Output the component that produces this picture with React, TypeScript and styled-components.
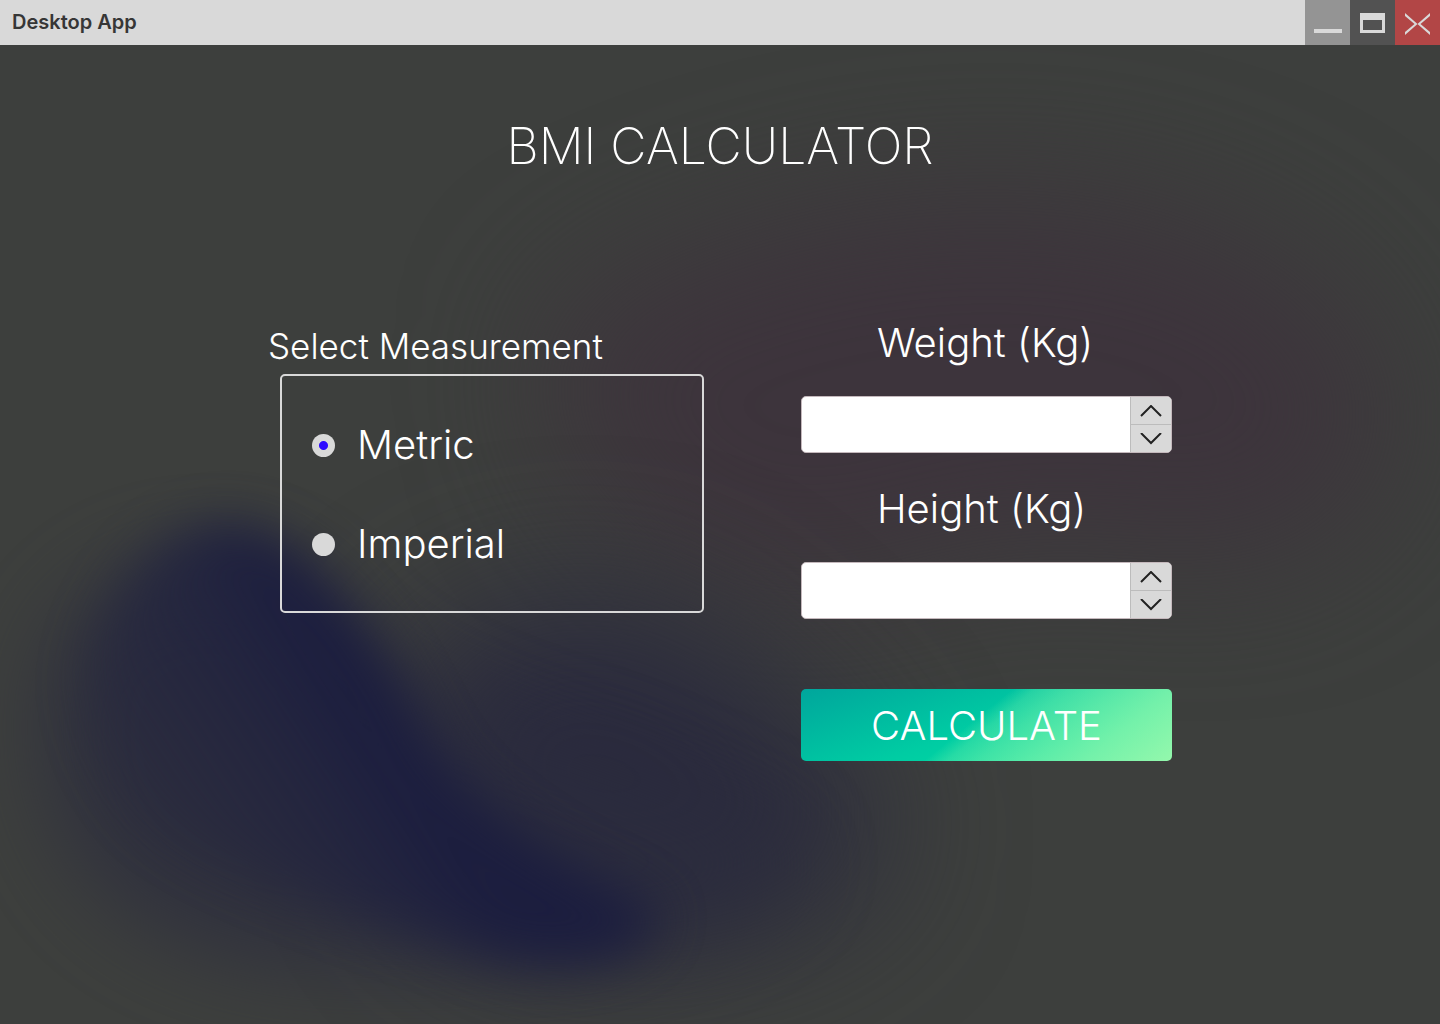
import React, { useState } from "react";
import styled, { createGlobalStyle } from "styled-components";

const GlobalStyle = createGlobalStyle`
  *, *::before, *::after { box-sizing: border-box; }
  body { margin: 0; background: #3d3f3d; }
  button, input { font: inherit; }
`;

const Window = styled.div`
  position: relative;
  isolation: isolate;
  display: flex;
  flex-direction: column;
  min-height: 100vh;
  background: #3d3f3d;
  color: #fff;
  font-family: Inter, "Liberation Sans", sans-serif;
  font-weight: 300;
`;

const Backdrop = styled.svg`
  position: absolute;
  inset: 0;
  z-index: -1;
  width: 100%;
  height: 100%;
`;

const TitleBar = styled.header`
  display: flex;
  justify-content: space-between;
  height: 45px;
  padding-left: 12px;
  background: #d9d9d9;
`;

const AppName = styled.span`
  color: #363636;
  font-size: 20px;
  font-weight: 600;
  line-height: 44px;
`;

const WindowControls = styled.div`
  display: flex;
`;

const WindowButton = styled.button<{ $color: string }>`
  display: block;
  width: 45px;
  height: 45px;
  padding: 0;
  border: 0;
  background: ${(p) => p.$color};
  color: #d9d9d9;

  svg { display: block; }
`;

const Main = styled.main`
  display: flex;
  flex-direction: column;
  padding: 71px 24px 64px;
`;

const Title = styled.h1`
  margin: 0 0 142px;
  font-size: 50px;
  font-weight: 200;
  line-height: 60px;
  text-align: center;
`;

const Form = styled.form`
  display: grid;
  grid-template-columns: minmax(0, 436px) minmax(0, 371px);
  justify-content: center;
  align-items: start;
  gap: 97px;
`;

const Measurement = styled.fieldset`
  min-width: 0;
  margin: 0;
  padding: 0;
  border: 0;
`;

const Legend = styled.legend`
  padding: 6px 0;
  font-size: 35px;
  line-height: 44px;
`;

const Options = styled.div`
  display: flex;
  flex-direction: column;
  gap: 49px;
  margin-left: 12px;
  padding: 44px 30px 42px;
  border: 2px solid #d9d9d9;
  border-radius: 5px;
`;

const Option = styled.label`
  display: flex;
  align-items: center;
  gap: 22px;
  font-size: 40px;
  line-height: 50px;
`;

const Radio = styled.input`
  appearance: none;
  width: 23px;
  height: 23px;
  margin: 0;
  border-radius: 50%;
  background: #d9d9d9;

  &:checked {
    background: radial-gradient(circle, #2e0aff 4px, #d9d9d9 5px);
  }
`;

const Fields = styled.div`
  display: flex;
  flex-direction: column;
  gap: 31px;
`;

const Field = styled.div`
  display: flex;
  flex-direction: column;
  gap: 28px;
`;

const FieldLabel = styled.label`
  padding-left: 76px;
  font-size: 40px;
  line-height: 50px;
`;

const Spinner = styled.div`
  display: flex;
  height: 57px;
  overflow: hidden;
  border: 1px solid #c4b8bc;
  border-radius: 5px;
  background: #fff;
`;

const NumberInput = styled.input`
  flex: 1;
  min-width: 0;
  padding: 0 16px;
  border: 0;
  outline: 0;
  background: transparent;
  color: #222;
  font-size: 35px;
  appearance: textfield;

  &::-webkit-inner-spin-button { appearance: none; }
`;

const Steps = styled.div`
  display: flex;
  flex-direction: column;
  width: 41px;
  border-left: 1px solid #bcbcbc;
`;

const StepButton = styled.button`
  display: flex;
  flex: 1;
  align-items: center;
  justify-content: center;
  padding: 0;
  border: 0;
  background: #d9d9d9;
  color: #222;

  & + & { border-top: 1px solid #bcbcbc; }
`;

const CalculateButton = styled.button`
  height: 72px;
  margin-top: 39px;
  padding: 2px 0 0;
  border: 0;
  border-radius: 5px;
  background:
    linear-gradient(
      141deg,
      rgba(148, 248, 172, 0) 46%,
      rgba(148, 248, 172, 0.26) 51%,
      rgba(148, 248, 172, 0.42) 58%,
      rgba(148, 248, 172, 0.6) 69%,
      rgba(148, 248, 172, 0.78) 81%,
      #94f8ac 100%
    ),
    linear-gradient(161deg, #00a69c 0%, #00cca3 50%, #00d9a3 75%);
  color: #fff;
  font-size: 40px;
  line-height: 50px;
`;

function WindowBackdrop() {
  return (
    <Backdrop viewBox="0 0 1440 1024" preserveAspectRatio="none" aria-hidden="true">
      <defs>
        <filter id="wide" x="-50%" y="-50%" width="200%" height="200%" colorInterpolationFilters="sRGB">
          <feGaussianBlur stdDeviation="70" />
        </filter>
        <filter id="medium" x="-50%" y="-50%" width="200%" height="200%" colorInterpolationFilters="sRGB">
          <feGaussianBlur stdDeviation="42" />
        </filter>
        <filter id="tight" x="-50%" y="-50%" width="200%" height="200%" colorInterpolationFilters="sRGB">
          <feGaussianBlur stdDeviation="25" />
        </filter>
        <linearGradient id="blue" gradientUnits="userSpaceOnUse" x1="400" y1="760" x2="140" y2="930">
          <stop offset="0" stopColor="#1b1d3f" />
          <stop offset="0.25" stopColor="#1e2040" stopOpacity="0.75" />
          <stop offset="1" stopColor="#24253f" stopOpacity="0.1" />
        </linearGradient>
      </defs>
      <path d="M560 320C760 190 1100 140 1300 280C1440 390 1400 540 1220 560C1080 540 980 530 880 580C740 640 500 480 560 320Z" fill="#3d343c" filter="url(#wide)" />
      <path d="M440 640C540 580 660 580 740 660C840 740 900 800 870 870C780 950 600 960 480 920C380 840 380 700 440 640Z" fill="#2a2a3d" filter="url(#wide)" />
      <path d="M50 660C90 560 260 520 330 620C430 740 640 740 800 850C780 960 480 980 320 970C160 960 10 880 50 660Z" fill="#2b2c3e" opacity="0.75" filter="url(#medium)" />
      <path d="M90 640C130 540 200 515 250 525C320 550 380 640 425 730C460 800 540 850 660 910C650 965 580 970 500 960C410 940 200 870 140 820C90 770 70 700 90 640Z" fill="url(#blue)" opacity="0.95" filter="url(#tight)" />
    </Backdrop>
  );
}

type NumberFieldProps = { id: string; label: string };

function NumberField({ id, label }: NumberFieldProps) {
  const [value, setValue] = useState("");
  const step = (amount: number) => setValue(String(Math.max(0, Number(value) + amount)));

  return (
    <Field>
      <FieldLabel htmlFor={id}>{label}</FieldLabel>
      <Spinner>
        <NumberInput id={id} type="number" min="0" value={value} onChange={(e) => setValue(e.target.value)} />
        <Steps>
          <StepButton type="button" aria-label={`Increase ${label}`} onClick={() => step(1)}>
            <svg width="22" height="12" viewBox="0 0 22 12" fill="none" stroke="currentColor" strokeWidth="2">
              <path d="M1 11L11 1L21 11" />
            </svg>
          </StepButton>
          <StepButton type="button" aria-label={`Decrease ${label}`} onClick={() => step(-1)}>
            <svg width="22" height="12" viewBox="0 0 22 12" fill="none" stroke="currentColor" strokeWidth="2">
              <path d="M1 0L11 10L21 0" />
            </svg>
          </StepButton>
        </Steps>
      </Spinner>
    </Field>
  );
}

export default function App() {
  const [unit, setUnit] = useState("Metric");

  return (
    <>
      <GlobalStyle />
      <Window>
        <WindowBackdrop />
        <TitleBar>
          <AppName>Desktop App</AppName>
          <WindowControls>
            <WindowButton type="button" aria-label="Minimize" $color="#949494">
              <svg width="45" height="45" viewBox="0 0 45 45" fill="currentColor">
                <path d="M9 29H37V33H9Z" />
              </svg>
            </WindowButton>
            <WindowButton type="button" aria-label="Maximize" $color="#525252">
              <svg width="45" height="45" viewBox="0 0 45 45" fill="currentColor" fillRule="evenodd">
                <path d="M10 13H35V33H10ZM13 20V30H32V20Z" />
              </svg>
            </WindowButton>
            <WindowButton type="button" aria-label="Close" $color="#b24646">
              <svg width="45" height="45" viewBox="0 0 45 45" fill="currentColor">
                <path d="M10 13L22.500 24L10 35V32L19.500 24L10 16ZM35 13L22.500 24L35 35V32L25.500 24L35 16Z" />
              </svg>
            </WindowButton>
          </WindowControls>
        </TitleBar>
        <Main>
          <Title>BMI CALCULATOR</Title>
          <Form onSubmit={(e) => e.preventDefault()}>
            <Measurement>
              <Legend>Select Measurement</Legend>
              <Options>
                {["Metric", "Imperial"].map((name) => (
                  <Option key={name}>
                    <Radio type="radio" name="unit" checked={unit === name} onChange={() => setUnit(name)} />
                    {name}
                  </Option>
                ))}
              </Options>
            </Measurement>
            <Fields>
              <NumberField id="weight" label="Weight (Kg)" />
              <NumberField id="height" label="Height (Kg)" />
              <CalculateButton type="submit">CALCULATE</CalculateButton>
            </Fields>
          </Form>
        </Main>
      </Window>
    </>
  );
}
